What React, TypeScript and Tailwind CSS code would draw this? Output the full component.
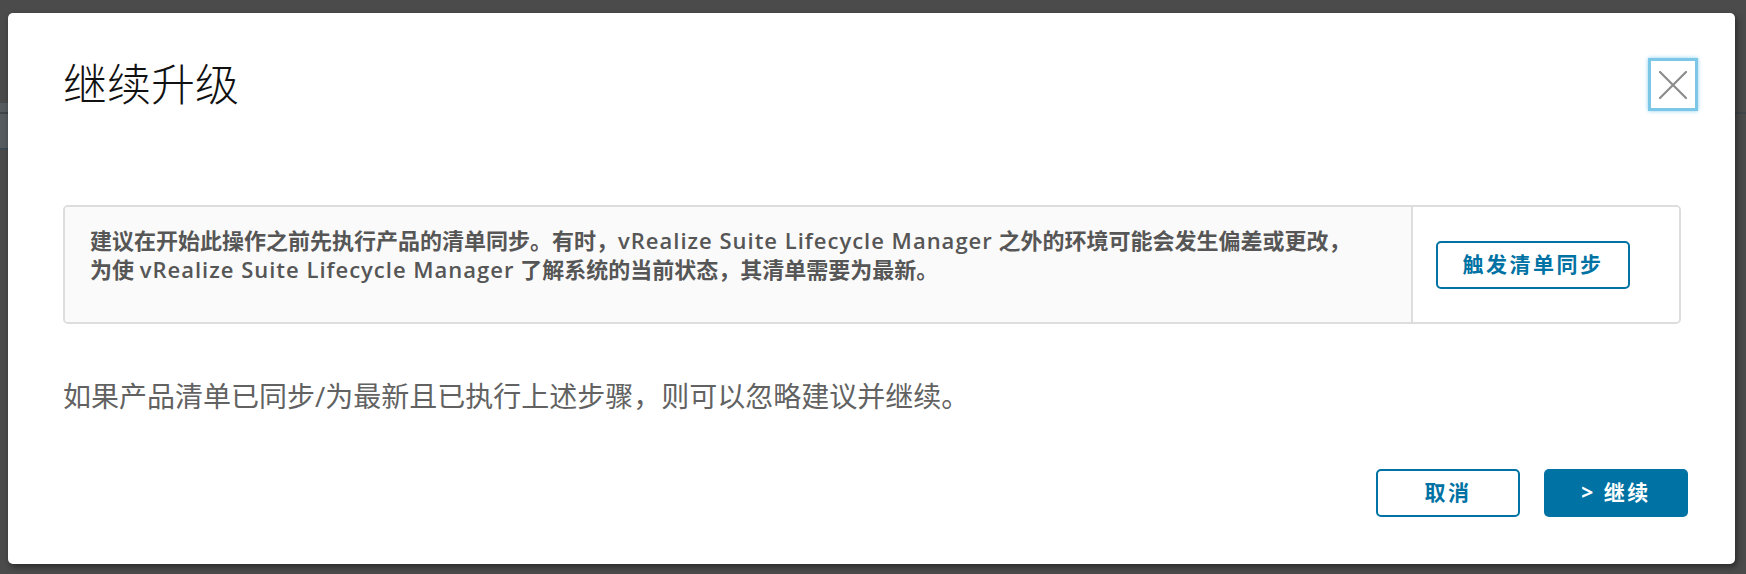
const font = "font-['Open_Sans','Noto_Sans_CJK_SC',sans-serif]";

const CloseIcon = () => (
    <svg width="28" height="28" viewBox="0 0 28 28" fill="none">
        <path d="M1 1 L27 27 M27 1 L1 27" stroke="#8c8c8c" strokeWidth="2.2" strokeLinecap="round" />
    </svg>
);

// product name is set a touch wider than Open Sans to match the original face
const Product = () => <span className="tracking-[1px]">vRealize Suite Lifecycle Manager</span>;

export default function App() {
    return (
        <div className={`w-[1746px] h-[574px] bg-[#4b4b4b] relative overflow-hidden ${font}`}>
            {/* faint page behind the overlay */}
            <div className="absolute left-0 top-[103px] w-[10px] h-[47px] bg-[#555b5f] border-b-2 border-[#3d4a54]" />
            <div className="absolute left-0 right-0 top-[112px] h-[2px] bg-[#3f4549]" />

            <div className="absolute left-[8px] top-[13px] w-[1727px] h-[551px] bg-white rounded-[5px] shadow-[2px_3px_6px_rgba(0,0,0,0.45)] flex flex-col pt-[45px] pl-[55px] pr-[37px] pb-[47px]">
                <div className="flex items-center justify-between h-[53px]">
                    <h1 className="text-[44px] leading-[53px] font-light text-[#111] -mt-[1px]">继续升级</h1>
                    <button className="w-[50px] h-[53px] border-[3px] border-[#7cc6e7] shadow-[0_0_4px_#8fd0ee] flex items-center justify-center bg-white">
                        <CloseIcon />
                    </button>
                </div>

                <div className="mt-[94px] mr-[17px] h-[119px] flex border-2 border-[#dddddd] rounded-[5px] overflow-hidden">
                    <div className="flex-1 bg-[#fafafa] pl-[25px] pt-[19px]">
                        <p className="text-[22px] leading-[29px] font-semibold text-[#565656]">
                            建议在开始此操作之前先执行产品的清单同步。有时，<Product /> 之外的环境可能会发生偏差或更改，
                            <br />
                            为使 <Product /> 了解系统的当前状态，其清单需要为最新。
                        </p>
                    </div>
                    <div className="w-[268px] border-l-2 border-[#dddddd] bg-white flex items-center pl-[23px]">
                        <button className="w-[194px] h-[48px] border-2 border-[#0072a3] rounded-[5px] text-[#0072a3] text-[21px] font-bold tracking-[0.12em] flex items-center justify-center">
                            触发清单同步
                        </button>
                    </div>
                </div>

                <p className="mt-[52px] text-[28px] leading-[40px] text-[#626262]">
                    如果产品清单已同步/为最新且已执行上述步骤，则可以忽略建议并继续。
                </p>

                <div className="mt-[53px] flex justify-end gap-[24px] pr-[10px]">
                    <button className="w-[144px] h-[48px] border-2 border-[#0072a3] rounded-[5px] text-[#0072a3] text-[21px] font-bold tracking-[0.12em] flex items-center justify-center">
                        取消
                    </button>
                    <button className="w-[144px] h-[48px] bg-[#0072a3] rounded-[5px] text-white text-[21px] font-bold tracking-[0.12em] flex items-center justify-center">
                        &gt; 继续
                    </button>
                </div>
            </div>
        </div>
    );
}
